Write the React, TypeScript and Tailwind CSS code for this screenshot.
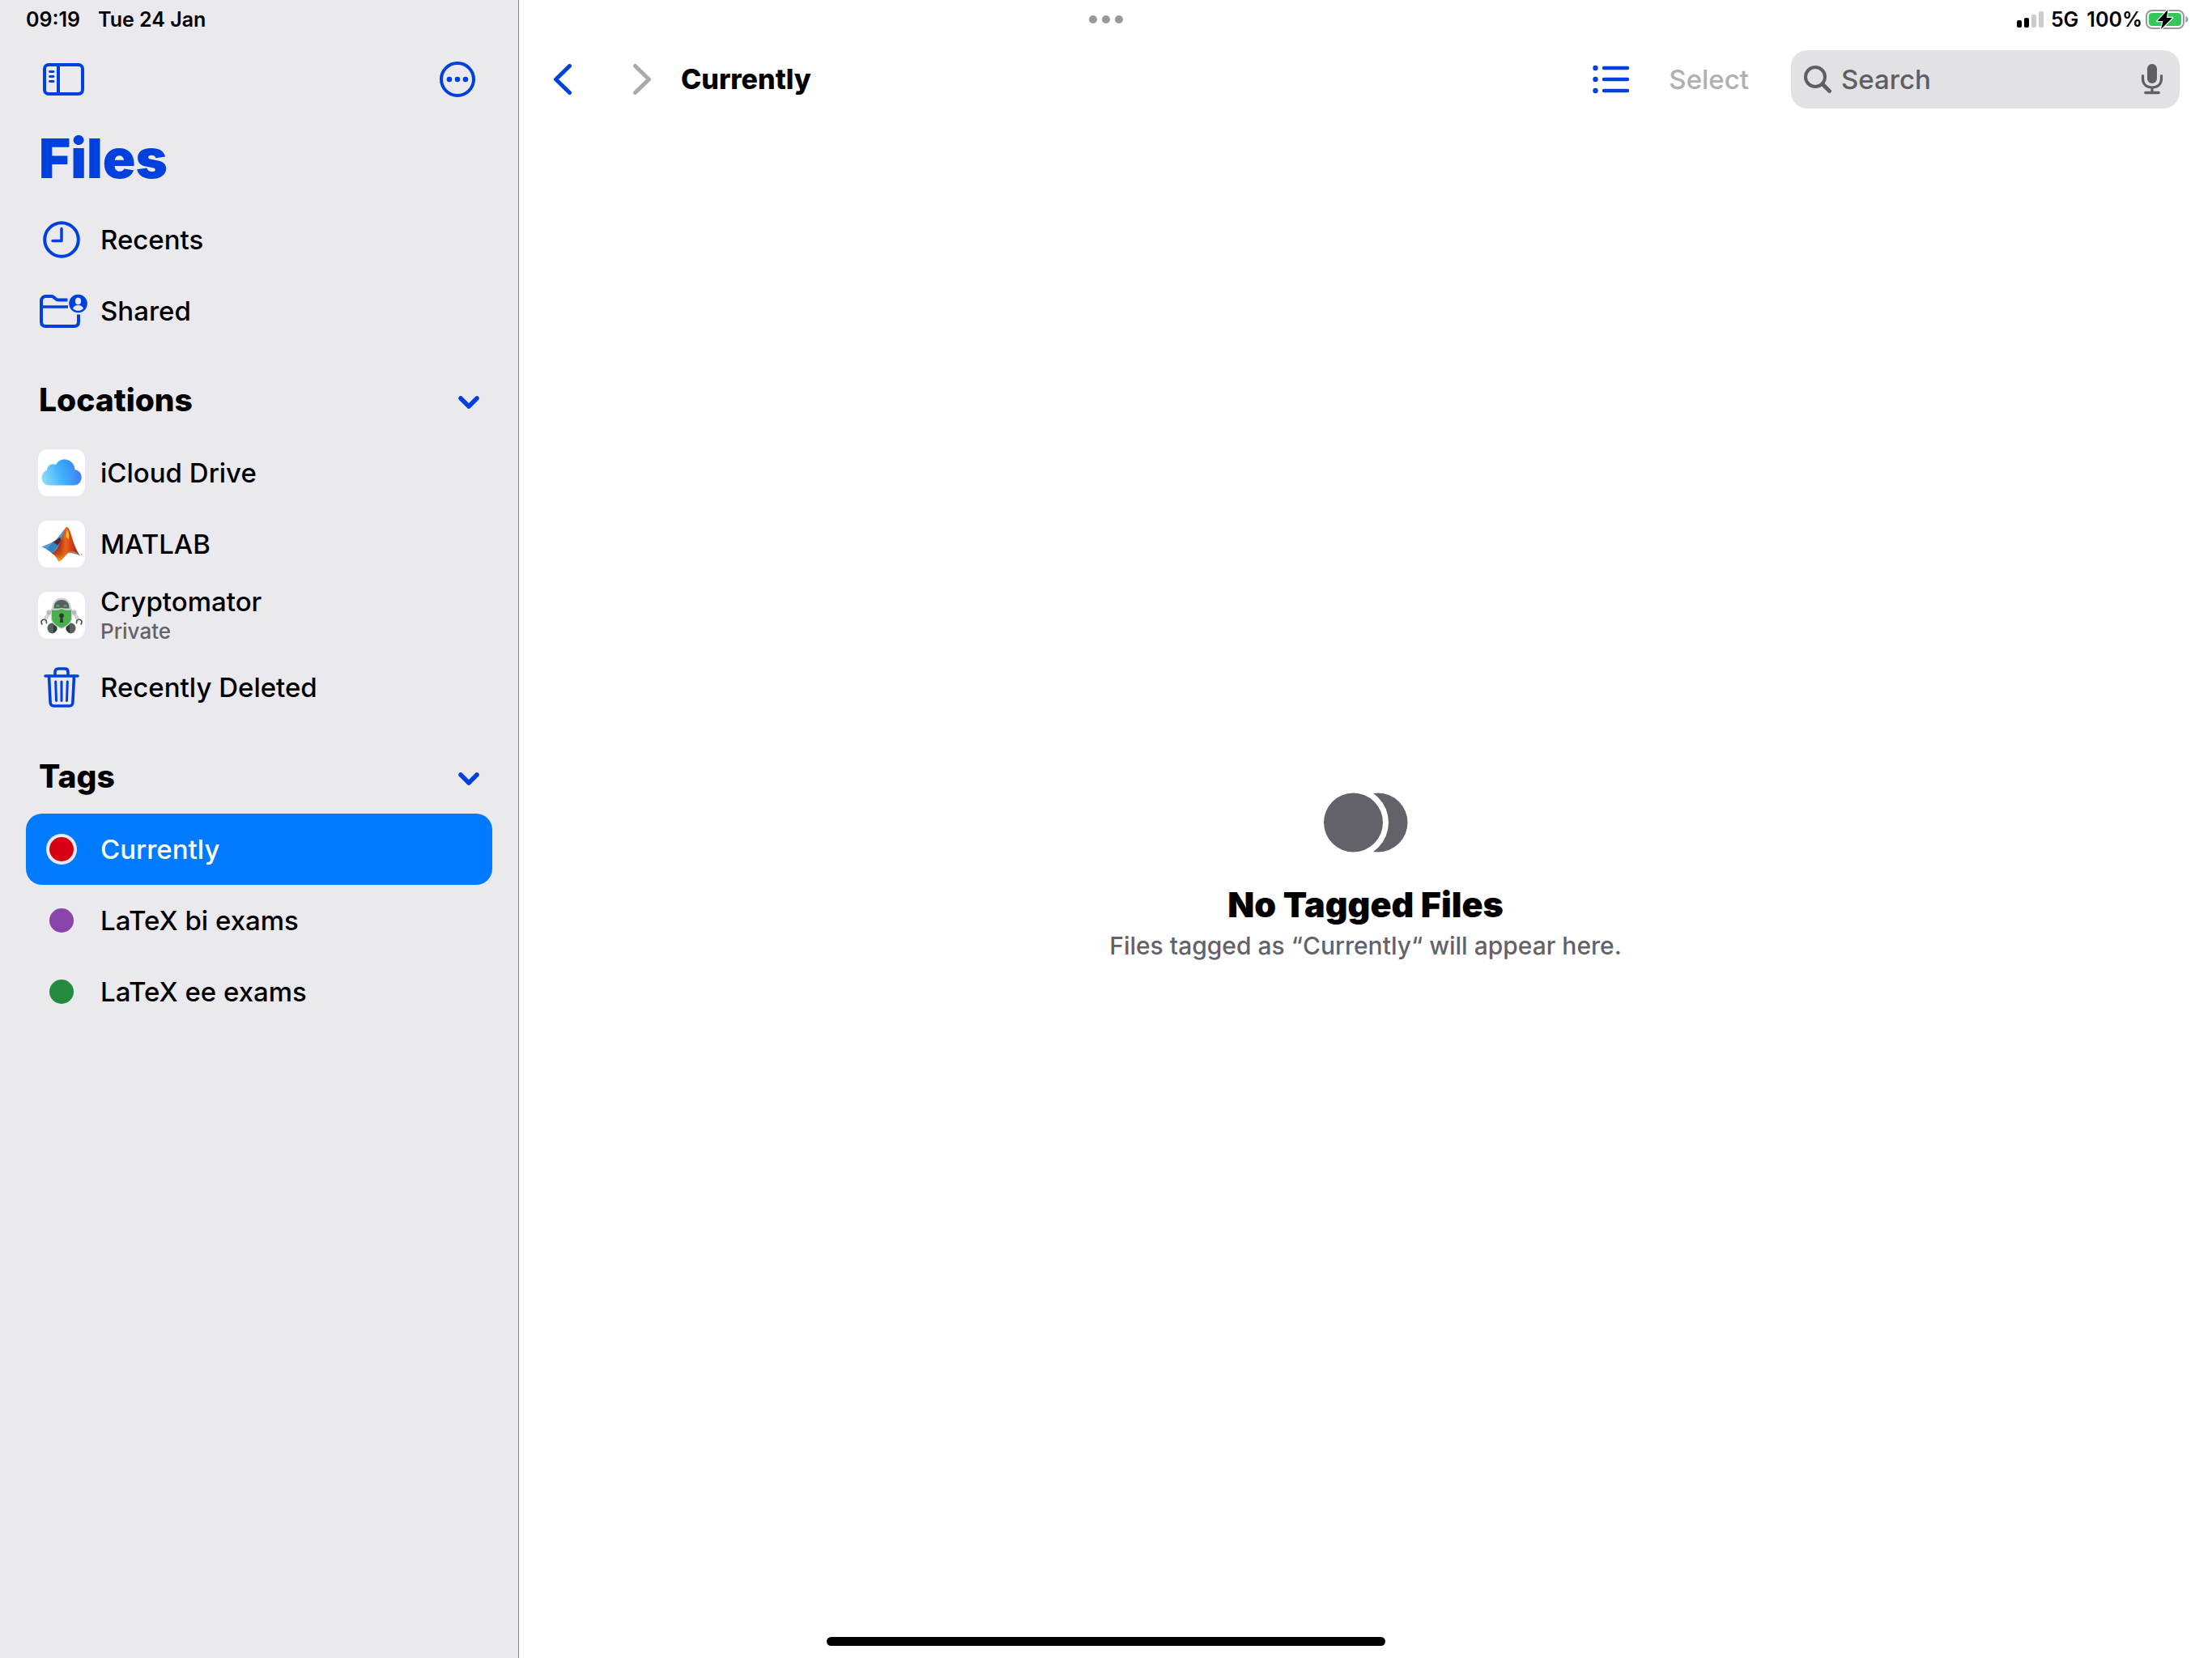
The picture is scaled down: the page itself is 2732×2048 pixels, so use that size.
import { useState } from "react"
import type { ReactNode } from "react"

const STROKE = {
  fill: "none",
  stroke: "currentColor",
  strokeLinecap: "round",
  strokeLinejoin: "round",
} as const

function SignalIcon() {
  return (
    <svg width="34" height="22" viewBox="0 0 34 22" aria-hidden="true">
      <rect x="0" y="12" width="6" height="9" rx="2" fill="#000" />
      <rect x="9" y="9" width="6" height="12" rx="2" fill="#000" />
      <rect x="18" y="5" width="6" height="16" rx="2" fill="#ccc" />
      <rect x="27" y="1" width="6" height="20" rx="2" fill="#ccc" />
    </svg>
  )
}

function BatteryIcon() {
  return (
    <svg width="54" height="26" viewBox="0 0 54 26" aria-hidden="true">
      <rect x="1" y="2" width="46" height="22" rx="7" fill="none" stroke="#999" strokeWidth="2" />
      <path d="M49.5 9v8c2-.6 3-2.2 3-4s-1-3.400-3-4z" fill="#999" />
      <rect x="4" y="5" width="40" height="16" rx="4" fill="#34c759" />
      <path
        d="M27.500 1 14.500 15h7l-2.500 10L33 11h-7z"
        fill="#000"
        stroke="#fff"
        strokeWidth="2.500"
        strokeLinejoin="round"
        paintOrder="stroke"
      />
    </svg>
  )
}

function SidebarIcon() {
  return (
    <svg width="52" height="42" viewBox="0 0 52 42" aria-hidden="true" {...STROKE} strokeWidth="4">
      <rect x="3" y="3" width="47" height="36" rx="5" />
      <path d="M20 3v36" />
      <path d="M9.500 11.500h4.500M9.500 17.500h4.500M9.500 23.500h4.500" strokeWidth="2.800" />
    </svg>
  )
}

function MoreIcon() {
  return (
    <svg width="46" height="46" viewBox="0 0 46 46" aria-hidden="true">
      <circle cx="23" cy="23" r="20" fill="none" stroke="currentColor" strokeWidth="4" />
      <circle cx="13" cy="23" r="3.300" fill="currentColor" />
      <circle cx="23" cy="23" r="3.300" fill="currentColor" />
      <circle cx="33" cy="23" r="3.300" fill="currentColor" />
    </svg>
  )
}

function ClockIcon() {
  return (
    <svg width="46" height="46" viewBox="0 0 46 46" aria-hidden="true" {...STROKE} strokeWidth="4">
      <circle cx="23" cy="23" r="20.800" />
      <path d="M23 9.500v15H12" strokeWidth="3.500" />
    </svg>
  )
}

function SharedFolderIcon() {
  return (
    <svg width="64" height="44" viewBox="-5 -1 64 44" aria-hidden="true">
      <g {...STROKE} strokeLinecap="butt" strokeWidth="4">
        <path d="M34.500 7.500H23c-1.500 0-2.500-.6-3.500-1.600l-1.500-1.300C17 3.600 16 3 14.500 3H8C4.500 3 2 5 2 9v25.500c0 3.500 2 5.500 5.500 5.500h35c3.500 0 5.500-2 5.500-5.500V25.500" />
        <path d="M2 16h33" strokeWidth="3.500" />
      </g>
      <circle cx="47.500" cy="12" r="11.300" fill="currentColor" />
      <ellipse cx="47.500" cy="9" rx="3.600" ry="4.300" fill="#eae9ee" />
      <path d="M41 18c1-2.600 3.500-4 6.500-4s5.500 1.400 6.500 4c-1.800 1.900-4 2.800-6.500 2.800s-4.700-.9-6.500-2.800z" fill="#eae9ee" />
    </svg>
  )
}

function TrashIcon() {
  return (
    <svg width="44" height="50" viewBox="0 0 44 50" aria-hidden="true" {...STROKE} strokeWidth="3.600">
      <path d="M2 11h40" />
      <path d="M14 10.500V6c0-2.600 1.500-4 4-4h8c2.500 0 4 1.400 4 4v4.500" />
      <path d="m6.500 11 1.600 32.500c.2 3 1.700 4.500 4.400 4.500h19c2.700 0 4.200-1.500 4.400-4.500L37.500 11" />
      <path d="m14.700 18 .8 23.500M22 18v23.500M29.300 18l-.8 23.500" strokeWidth="3" />
    </svg>
  )
}

function ChevronDownIcon() {
  return (
    <svg width="26" height="16" viewBox="0 0 26 16" aria-hidden="true" {...STROKE} strokeWidth="5.500">
      <path d="M3 3l10 10L23 3" />
    </svg>
  )
}

function ChevronIcon({ right = false }: { right?: boolean }) {
  return (
    <svg width="24" height="40" viewBox="0 0 24 40" aria-hidden="true" {...STROKE} strokeWidth="5">
      <path d={right ? "M3.500 3.500 20.500 20l-17 16.500" : "M20.500 3.500 3.500 20l17 16.500"} />
    </svg>
  )
}

function ListIcon() {
  return (
    <svg width="46" height="36" viewBox="0 0 46 36" aria-hidden="true">
      <g fill="currentColor">
        <circle cx="3.500" cy="4" r="3.200" />
        <circle cx="3.500" cy="18" r="3.200" />
        <circle cx="3.500" cy="32" r="3.200" />
      </g>
      <path d="M14 4h29M14 18h29M14 32h29" {...STROKE} strokeWidth="4.500" />
    </svg>
  )
}

function SearchIcon() {
  return (
    <svg width="34" height="34" viewBox="0 0 34 34" aria-hidden="true" {...STROKE}>
      <circle cx="14" cy="14" r="12" strokeWidth="4" />
      <path d="m23 23 8.500 8.500" strokeWidth="4.800" />
    </svg>
  )
}

function MicIcon() {
  return (
    <svg width="28" height="38" viewBox="0 0 28 38" aria-hidden="true">
      <rect x="8" y="0" width="12" height="24" rx="6" fill="currentColor" />
      <g {...STROKE} strokeWidth="3.200">
        <path d="M2.500 14.500v3.500c0 7 4.500 11 11.500 11s11.500-4 11.500-11v-3.500" />
        <path d="M14 30v5" />
        <path d="M6 35.500h16" strokeWidth="3.600" />
      </g>
    </svg>
  )
}

function TagsIcon() {
  return (
    <svg width="104" height="74" viewBox="0 0 104 74" aria-hidden="true">
      <circle cx="67" cy="37" r="36.500" fill="#636268" />
      <circle cx="36.500" cy="37" r="43.500" fill="#fff" />
      <circle cx="36.500" cy="37" r="36.500" fill="#636268" />
    </svg>
  )
}

function ICloudLogo() {
  return (
    <svg width="58" height="58" viewBox="0 0 58 58" aria-hidden="true">
      <defs>
        <linearGradient id="cloud-body" x1="0" y1="0.700" x2="1" y2="0.500">
          <stop offset="0" stopColor="#8fdcf8" />
          <stop offset="0.500" stopColor="#3eb2fc" />
          <stop offset="1" stopColor="#4479f2" />
        </linearGradient>
        <linearGradient id="cloud-top" x1="0" y1="1" x2="1" y2="0">
          <stop offset="0" stopColor="#45bcfd" stopOpacity="0.200" />
          <stop offset="1" stopColor="#2f8df4" />
        </linearGradient>
      </defs>
      <path
        d="M14 44.500C8.600 44.500 4.500 40.300 4.500 35c0-4.200 2.500-7.600 6.300-9 .4-4.600 3.700-7.700 7.900-7.700 1.200 0 2.300.3 3.300.8 2-4 6-6.600 10.600-6.600 7.200 0 12.600 5.500 12.900 12.800 4.700.4 8.200 4.300 8.200 9.400 0 5.500-4.200 9.800-9.500 9.800z"
        fill="url(#cloud-body)"
      />
      <circle cx="32.700" cy="25.400" r="12.600" fill="url(#cloud-top)" opacity="0.700" />
    </svg>
  )
}

function MatlabLogo() {
  return (
    <svg width="58" height="58" viewBox="0 0 58 58" aria-hidden="true">
      <defs>
        <linearGradient id="membrane" x1="0" y1="0" x2="1" y2="0">
          <stop offset="0" stopColor="#6b1410" />
          <stop offset="0.300" stopColor="#b52c14" />
          <stop offset="0.480" stopColor="#e86a1b" />
          <stop offset="0.620" stopColor="#dc4a18" />
          <stop offset="1" stopColor="#981a10" />
        </linearGradient>
        <linearGradient id="membrane-low" x1="0" y1="0" x2="0" y2="1">
          <stop offset="0" stopColor="#d94a18" stopOpacity="0" />
          <stop offset="0.600" stopColor="#e2661a" stopOpacity="0.500" />
          <stop offset="1" stopColor="#fcb52b" />
        </linearGradient>
      </defs>
      <path d="M4.500 32.500 18.500 26.500c3-1.500 7-6.500 10-10.500 2.500-3.200 4.500-6.500 7.500-8L24 38l-7 2.500c-4-3.500-8-6-12.500-8z" fill="#4c9bd3" />
      <path d="m18.500 26.500 7-1.500 1 3-8.500 12-7-4.500z" fill="#3b7fb8" />
      <path d="M18.500 26.500c3-1.500 6-4 9-6l1 4-4 6z" fill="#5a2430" />
      <path d="M35.500 8c3.500 0 6.500 14 9.500 22 2 5.500 4 9.500 7 13.500-4.500-3.500-8-5.500-12.500-4.500C34.500 40 30 50 25.500 50.500 24 47 20.500 42 17 40.500c7-2.500 9.500-12 12.500-19.500C31.500 15.500 33 8 35.500 8z" fill="url(#membrane)" />
      <path d="M17 40.500c6-2 9-9 11.500-15L39 38.500C34 40.500 30 50 25.500 50.500 24 47 20.500 42 17 40.500z" fill="url(#membrane-low)" />
      <path d="M36 11c1.800 3 2.500 8 2 12.500-1.500-1.500-2.500-3-3.500-3 .3-3.500.6-7 1.500-9.500z" fill="#fbc02d" />
      <path d="M36.500 40c5-4 10.500-1.500 15.500 3.500-5-1.800-9.500-3.500-15.500-3.500z" fill="#8d8d8d" />
      <circle cx="53.500" cy="42" r="1" fill="#8fa8e0" />
    </svg>
  )
}

function CryptomatorLogo() {
  return (
    <svg width="58" height="58" viewBox="0 0 58 58" aria-hidden="true">
      <path d="M14 26 8.500 34M44 26l5.500 8" fill="none" stroke="#d2d3d5" strokeWidth="4.500" />
      <circle cx="13.500" cy="25.500" r="3" fill="#b9babc" />
      <circle cx="44.500" cy="25.500" r="3" fill="#b9babc" />
      <path d="M5.500 40.300a3.300 3.300 0 1 1 4.500-1M52.500 40.300a3.300 3.300 0 1 0-4.500-1" fill="none" stroke="#4b4f52" strokeWidth="1.600" />
      <path d="M17 22c0-9 4.500-14.500 12-14.500S41 13 41 22z" fill="#cfd0d2" />
      <path d="M19.500 20.500c0-7 3.500-10.500 9.500-10.500s9.500 3.500 9.500 10.500z" fill="#565e60" />
      <path d="M22 18.500c.5-3.500 4.500-3.500 5 0zM31 18.500c.5-3.500 4.500-3.500 5 0z" fill="#49b54a" />
      <ellipse cx="17.500" cy="45" rx="6" ry="6.500" fill="#565e60" />
      <ellipse cx="40.500" cy="45" rx="6" ry="6.500" fill="#565e60" />
      <path d="M19 39.500c3 1 4.500 4 4.500 7.500l-4.500 4zM39 39.500c-3 1-4.500 4-4.500 7.500l4.500 4z" fill="#333839" />
      <path
        d="M17 22.500c5 .8 8.500.3 12-1.500 3.500 1.800 7 2.300 12 1.500v9.500C41 38 35 42.500 29 44.500c-6-2-12-6.500-12-12.500z"
        fill="#49b04b"
        stroke="#cfd0d2"
        strokeWidth="2.500"
        paintOrder="stroke"
      />
      <path d="M29 26.500a2.900 2.900 0 0 1 1.300 5.500l1 6h-4.600l1-6A2.900 2.900 0 0 1 29 26.500z" fill="#2f3638" />
    </svg>
  )
}

function LogoTile({ children }: { children: ReactNode }) {
  return <span className="block size-[58px] overflow-hidden rounded-[12px] bg-white">{children}</span>
}

function Dot({ className }: { className: string }) {
  return <span className={`block size-[30px] rounded-full ${className}`} />
}

interface RowProps {
  icon: ReactNode
  label: string
  note?: string
  selected?: boolean
  onClick?: () => void
}

function Row({ icon, label, note, selected = false, onClick }: RowProps) {
  return (
    <li>
      <button
        type="button"
        onClick={onClick}
        aria-current={selected ? "page" : undefined}
        className={`flex min-h-[88px] w-full items-center gap-4 rounded-[20px] pl-3 text-left ${
          selected ? "bg-[#007aff] text-white" : "text-black"
        } ${note ? "pt-[7px] pb-[8px]" : ""}`}
      >
        <span className="flex w-16 shrink-0 items-center justify-center text-[#0040dd]">{icon}</span>
        <span className="min-w-0">
          <span className="block truncate text-[33px] leading-[40px] font-medium">{label}</span>
          {note && <span className="block text-[26px] leading-[34px] font-medium text-[#636268]">{note}</span>}
        </span>
      </button>
    </li>
  )
}

function Section({ title, children }: { title: string; children: ReactNode }) {
  const [open, setOpen] = useState(true)

  return (
    <section className="mt-[22px]">
      <button
        type="button"
        aria-expanded={open}
        onClick={() => setOpen(!open)}
        className="flex h-[90px] w-full items-center justify-between px-4"
      >
        <h2 className="pb-[2px] text-[39px] leading-[48px] font-extrabold text-black">{title}</h2>
        <span className="pt-1 text-[#0040dd]">
          <ChevronDownIcon />
        </span>
      </button>
      {open && <ul>{children}</ul>}
    </section>
  )
}

const TAGS = [
  { name: "Currently", color: "bg-[#d70015]" },
  { name: "LaTeX bi exams", color: "bg-[#8944ab]" },
  { name: "LaTeX ee exams", color: "bg-[#248a3d]" },
]

function Sidebar({ tag, onTag }: { tag: string; onTag: (name: string) => void }) {
  return (
    <aside className="w-[641px] shrink-0 border-r border-[#8a8a8e] bg-[#eae9ee] px-8">
      <div className="flex h-12 items-center gap-[22px] text-[25px] leading-[48px] font-semibold text-black">
        <time>09:19</time>
        <span>Tue 24 Jan</span>
      </div>
      <div className="flex h-[100px] items-center justify-between px-5 text-[#0040dd]">
        <button type="button" aria-label="Hide sidebar">
          <SidebarIcon />
        </button>
        <button type="button" aria-label="More">
          <MoreIcon />
        </button>
      </div>
      <h1 className="h-[104px] pl-4 text-[67px] leading-[96px] font-black text-[#0040dd]">Files</h1>
      <nav>
        <ul>
          <Row icon={<ClockIcon />} label="Recents" />
          <Row icon={<SharedFolderIcon />} label="Shared" />
        </ul>
        <Section title="Locations">
          <Row icon={<LogoTile><ICloudLogo /></LogoTile>} label="iCloud Drive" />
          <Row icon={<LogoTile><MatlabLogo /></LogoTile>} label="MATLAB" />
          <Row icon={<LogoTile><CryptomatorLogo /></LogoTile>} label="Cryptomator" note="Private" />
          <Row icon={<TrashIcon />} label="Recently Deleted" />
        </Section>
        <Section title="Tags">
          {TAGS.map((t) => (
            <Row
              key={t.name}
              label={t.name}
              selected={t.name === tag}
              onClick={() => onTag(t.name)}
              icon={<Dot className={t.name === tag ? `${t.color} ring-4 ring-[#eae9ee]` : t.color} />}
            />
          ))}
        </Section>
      </nav>
    </aside>
  )
}

function Toolbar({ title }: { title: string }) {
  return (
    <header className="flex h-[100px] items-center pr-10 pl-[42px]">
      <button type="button" aria-label="Back" className="text-[#0040dd]">
        <ChevronIcon />
      </button>
      <button type="button" aria-label="Forward" disabled className="ml-[74px] text-[#aaaaaa]">
        <ChevronIcon right />
      </button>
      <h2 className="ml-9 text-[34px] leading-[44px] font-extrabold text-black">{title}</h2>
      <button type="button" aria-label="List view" className="ml-auto text-[#0040dd]">
        <ListIcon />
      </button>
      <button type="button" disabled className="ml-12 text-[33px] leading-[44px] font-medium text-[#b0b0b0]">
        Select
      </button>
      <label className="ml-[52px] flex h-[72px] w-[480px] items-center gap-3 rounded-[20px] bg-[#e2e2e4] pr-5 pl-4 text-[#5e5e63]">
        <SearchIcon />
        <input
          type="text"
          aria-label="Search"
          placeholder="Search"
          className="min-w-0 flex-1 bg-transparent text-[33px] leading-[44px] font-medium outline-none placeholder:text-[#5e5e63]"
        />
        <button type="button" aria-label="Dictate">
          <MicIcon />
        </button>
      </label>
    </header>
  )
}

export default function App() {
  const [tag, setTag] = useState("Currently")

  return (
    <div className="relative flex min-h-screen bg-white font-['Inter',sans-serif]">
      <Sidebar tag={tag} onTag={setTag} />
      <main className="flex min-w-0 flex-1 flex-col">
        <div className="flex h-12 items-center justify-end pr-7 text-[25px] leading-[48px] font-semibold text-black">
          <SignalIcon />
          <span className="ml-2">5G</span>
          <span className="ml-[10px]">100%</span>
          <span className="ml-1">
            <BatteryIcon />
          </span>
        </div>
        <Toolbar title={tag} />
        <div className="flex flex-1 flex-col items-center justify-center pb-[26px] text-center">
          <TagsIcon />
          <h3 className="mt-9 text-[43px] leading-[56px] font-black text-black">No Tagged Files</h3>
          <p className="text-[30px] leading-[46px] font-medium text-[#636268]">
            Files tagged as “{tag}“ will appear here.
          </p>
        </div>
      </main>
      {/* Multitasking dots and home bar float over both columns */}
      <button type="button" aria-label="Multitasking" className="absolute top-[19px] left-1/2 flex -translate-x-1/2 gap-[6px]">
        <span className="size-[10px] rounded-full bg-[#999999]" />
        <span className="size-[10px] rounded-full bg-[#999999]" />
        <span className="size-[10px] rounded-full bg-[#999999]" />
      </button>
      <div className="absolute bottom-[15px] left-1/2 h-[11px] w-[690px] -translate-x-1/2 rounded-full bg-black" />
    </div>
  )
}
